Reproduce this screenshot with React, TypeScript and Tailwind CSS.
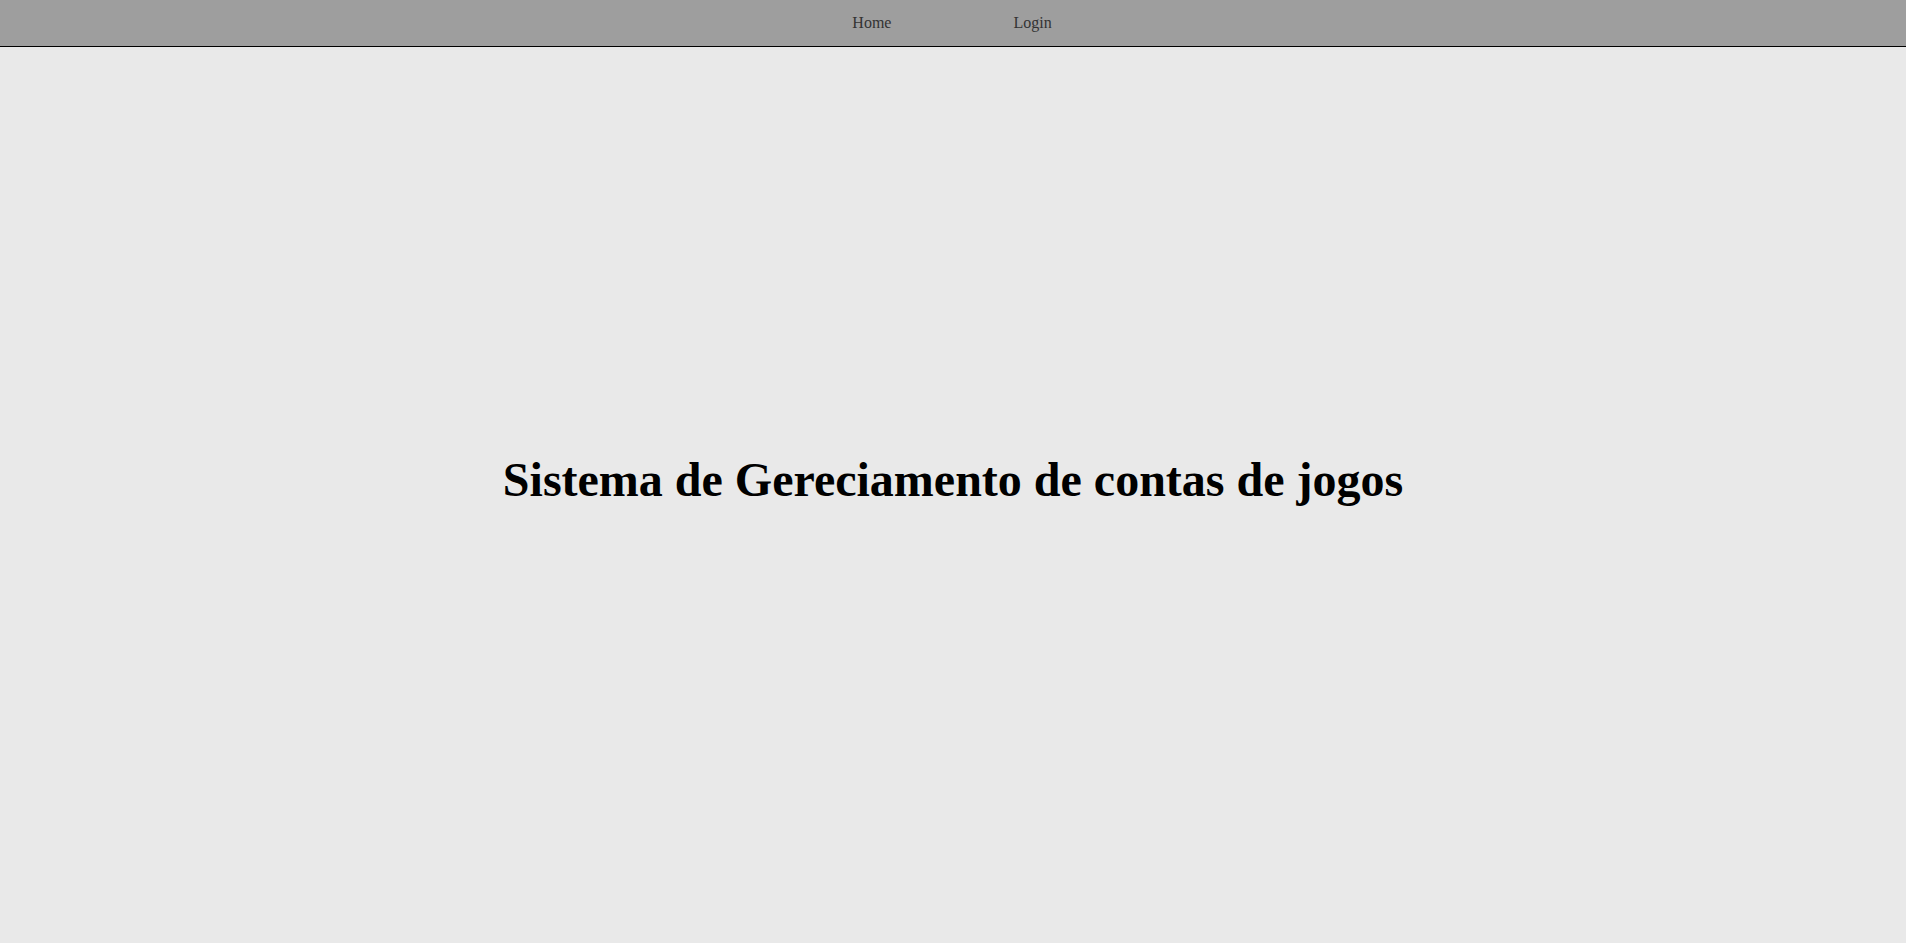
export default function App() {
  return (
    <div className="min-h-screen flex flex-col bg-[#e9e9e9] font-['Liberation_Serif',serif]">
      <header className="h-[47px] bg-[#9e9e9e] border-b border-black flex items-center justify-center">
        <nav>
          <ul className="flex items-center gap-[122px] text-base text-[#333] pr-[2px]">
            <li>
              <a href="#home">Home</a>
            </li>
            <li>
              <a href="#login">Login</a>
            </li>
          </ul>
        </nav>
      </header>
      <main className="flex-1 flex items-center justify-center pb-[30px]">
        <h1 className="text-[48px] font-bold text-black">
          Sistema de Gereciamento de contas de jogos
        </h1>
      </main>
    </div>
  );
}
